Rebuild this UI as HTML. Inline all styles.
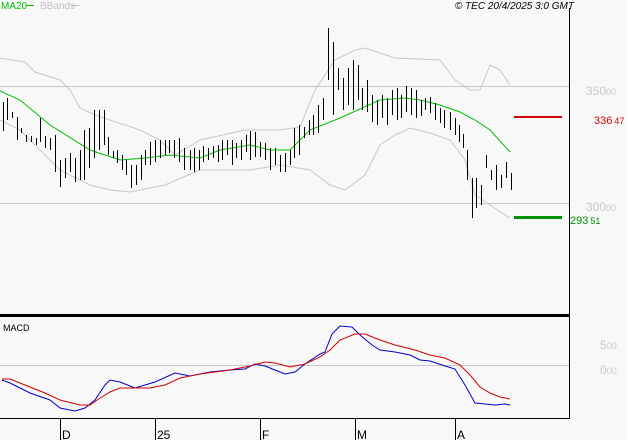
<!DOCTYPE html>
<html><head><meta charset="utf-8"><style>
html,body{margin:0;padding:0;background:#f8f8f8;}
svg{display:block;font-family:"Liberation Sans",sans-serif;}
</style></head><body>
<svg width="627" height="440" viewBox="0 0 627 440" xmlns="http://www.w3.org/2000/svg">
<rect width="627" height="440" fill="#f8f8f8"/>
<line x1="0" y1="86.5" x2="569" y2="86.5" stroke="#c8c8c8"/>
<line x1="0" y1="203.5" x2="569" y2="203.5" stroke="#c8c8c8"/>
<line x1="0" y1="365.5" x2="569" y2="365.5" stroke="#c8c8c8"/>
<line x1="569.5" y1="8" x2="569.5" y2="419" stroke="#000"/>
<rect x="0" y="314" width="570" height="3" fill="#000"/>
<line x1="0" y1="418.5" x2="570" y2="418.5" stroke="#000"/>
<g stroke="#000"><line x1="60.5" y1="419" x2="60.5" y2="440"/><line x1="155.5" y1="419" x2="155.5" y2="440"/><line x1="260.5" y1="419" x2="260.5" y2="440"/><line x1="355.5" y1="419" x2="355.5" y2="440"/><line x1="455.5" y1="419" x2="455.5" y2="440"/></g>
<g font-size="12" fill="#000"><text x="62" y="439">D</text><text x="157" y="439">25</text><text x="262" y="439">F</text><text x="357" y="439">M</text><text x="457" y="439">A</text></g>
<polyline fill="none" stroke="#c8c8c8" points="0,58 25,62 35,72 60,80 70,90 80,108 95,115 140,130 160,140 175,155 200,140 245,130 280,130 300,127 315,90 335,60 355,50 365,48 395,58 440,60 455,80 470,90 480,90 490,65 500,70 510,85"/>
<polyline fill="none" stroke="#c8c8c8" points="0,120 20,130 60,170 90,185 110,190 130,192 165,185 200,170 250,170 280,165 310,170 330,185 345,190 365,175 380,145 395,135 410,128 430,133 450,140 465,160 475,195 490,205 510,218"/>
<polyline fill="none" stroke="#00c000" points="0,91 20,100 50,125 90,150 120,160 145,158 170,155 200,158 220,150 250,145 270,150 290,150 310,130 340,118 380,100 405,98 420,100 440,105 460,112 475,120 490,130 510,152"/>
<path fill="none" stroke="#000" stroke-width="1.3" shape-rendering="crispEdges" transform="translate(0.5,0)" d="M3 102V131M7 98V120M12 112V118M17 117V140M21 128V133M26 135V142M31 136V142M36 138V145M40 118V142M45 136V148M50 138V150M55 135V172M60 160V187M65 158V178M70 153V172M75 158V182M80 150V180M84 130V180M89 128V168M94 110V158M99 110V150M104 110V145M108 137V155M113 151V158M117 150V163M122 155V170M126 160V175M131 165V188M136 165V185M141 155V180M145 150V165M150 142V165M155 140V162M160 140V158M165 140V155M169 140V153M174 140V158M179 138V162M184 148V170M190 150V170M194 148V172M199 150V170M203 146V162M208 148V160M213 146V158M218 145V162M222 140V160M227 140V155M232 140V165M236 143V158M241 140V160M246 135V152M250 131V160M255 132V157M260 142V157M265 143V160M270 148V170M275 148V165M280 155V172M285 153V172M290 150V165M294 128V158M299 125V155M304 127V138M309 120V135M313 115V135M318 105V133M323 98V120M328 28V80M333 42V115M338 68V90M343 78V110M348 68V105M353 60V110M358 65V100M362 88V110M367 80V112M372 95V122M377 100V125M382 95V118M387 98V125M392 90V115M397 88V120M401 95V118M406 86V112M411 88V115M416 90V118M421 100V116M425 98V110M430 97V113M435 103V120M440 108V123M444 110V128M450 112V130M455 118V135M459 125V142M463 134V148M467 150V180M472 178V218M476 178V208M481 185V205M486 155V168M491 170V180M496 165V190M501 175V188M506 162V178M511 173V190"/>
<rect x="514" y="116" width="48" height="2" fill="#d00000"/>
<rect x="514" y="216" width="48" height="3" fill="#009000"/>
<text x="594" y="124" font-size="11" fill="#d00000">336<tspan font-size="9" dx="2">47</tspan></text>
<text x="570" y="224" font-size="11" fill="#009000">293<tspan font-size="9" dx="2">51</tspan></text>
<text x="586" y="211" font-size="12" fill="#c8c8c8">300<tspan font-size="9">00</tspan></text>
<text x="586" y="95" font-size="12" fill="#c8c8c8">350<tspan font-size="9">00</tspan></text>
<text x="600" y="349" font-size="12" fill="#c8c8c8">5<tspan font-size="9">00</tspan></text>
<text x="600" y="374" font-size="12" fill="#c8c8c8">0<tspan font-size="9">00</tspan></text>
<text x="3" y="331" font-size="9" fill="#000">MACD</text>
<polyline fill="none" stroke="#0000d0" points="2,380 10,383 30,393 50,400 60,408 75,411 85,408 95,400 105,385 110,380 120,382 135,388 155,382 175,373 190,376 210,372 230,370 245,369 255,364 265,366 275,370 285,374 295,372 305,364 320,354 325,352 332,334 340,326 352,327 360,335 372,345 380,350 395,352 410,355 420,360 430,361 445,366 455,369 465,385 475,403 485,404 495,405 505,404 510,405"/>
<polyline fill="none" stroke="#d00000" points="2,379 10,379 30,387 45,393 60,400 80,405 90,405 100,398 110,392 120,388 150,388 165,385 180,378 200,374 230,370 250,366 265,362 275,363 290,367 305,364 320,357 330,350 340,340 355,334 365,334 380,340 395,345 415,350 430,355 445,358 460,365 470,375 480,387 490,393 500,397 510,399"/>
<text x="1" y="9" font-size="10" fill="#00c000">MA20</text>
<line x1="26" y1="5.5" x2="34" y2="5.5" stroke="#00c000"/>
<text x="40" y="9" font-size="10" fill="#c0c0c0">BBands</text>
<line x1="72" y1="5.5" x2="80" y2="5.5" stroke="#c0c0c0"/>
<text x="574" y="9" font-size="10" font-style="italic" fill="#000" text-anchor="end">© TEC 20/4/2025 3:0 GMT</text>
</svg>
</body></html>
